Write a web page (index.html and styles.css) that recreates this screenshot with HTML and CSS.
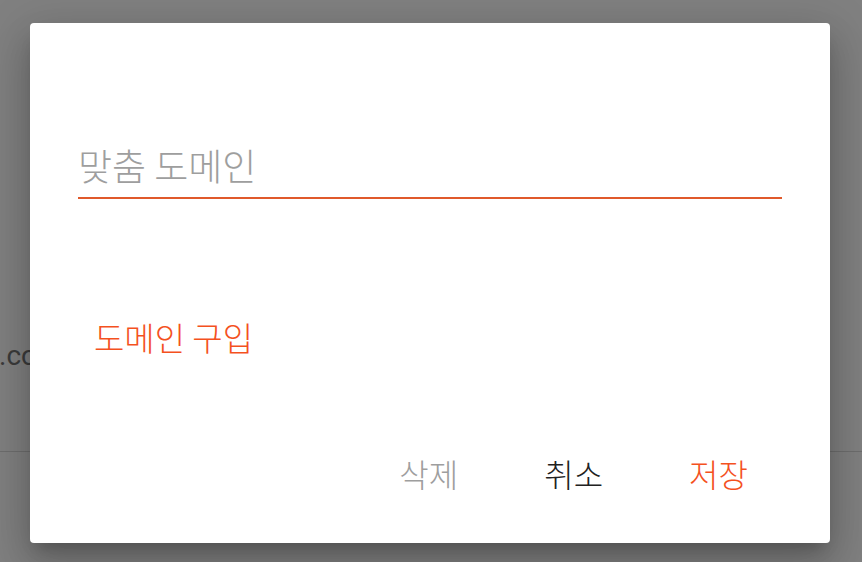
FILE: index.html
```html
<!DOCTYPE html>
<html>
    <head>
        <meta charset="utf-8">
        <title>맞춤 도메인</title>
        <link rel="stylesheet" href="styles.css">
    </head>
    <body>
    <div id="page">
        <div class="url">.com</div>
        <div class="rule"></div>
    </div>
    <div class="dialog">
        <div class="field">
            <input type="text" id="domain" placeholder="맞춤 도메인">
        </div>
        <div class="buy"><button class="btn accent">도메인 구입</button></div>
        <div class="actions">
            <button class="btn muted">삭제</button>
            <button class="btn">취소</button>
            <button class="btn accent">저장</button>
        </div>
    </div>
    </body>
</html>
```

FILE: styles.css
```css
body{
    margin: 0;
    height: 562px;
    background: #808080;
    font-family: "Noto Sans CJK KR", "Noto Sans", sans-serif;
    overflow: hidden;
}
#page{
    padding-top: 334px;
}
.url{
    font-family: Roboto, "Noto Sans CJK KR", sans-serif;
    font-size: 28px;
    line-height: 44px;
    color: #3b3b3b;
    margin-left: -1px;
}
.rule{
    margin-top: 73px;
    height: 1px;
    background: #6e6e6e;
}
.dialog{
    position: absolute;
    left: 30px;
    top: 23px;
    width: 800px;
    height: 520px;
    box-sizing: border-box;
    padding: 0 48px;
    background: #fff;
    border-radius: 4px;
    box-shadow: 0 11px 15px -7px rgba(0,0,0,.2), 0 24px 38px 3px rgba(0,0,0,.14), 0 9px 46px 8px rgba(0,0,0,.12);
    display: flex;
    flex-direction: column;
}
.field{
    margin-top: 118px;
    border-bottom: 2px solid #e0592b;
    padding-bottom: 8px;
}
#domain{
    display: block;
    width: 100%;
    height: 48px;
    border: 0;
    outline: none;
    padding: 0;
    font-family: inherit;
    font-size: 37px;
    font-weight: 300;
    color: #212121;
    background: transparent;
}
#domain::placeholder{
    color: #9e9e9e;
}
.buy{
    margin-top: 110px;
}
.btn{
    height: 56px;
    padding: 0 16px;
    border: 0;
    background: transparent;
    font-family: inherit;
    font-size: 32px;
    font-weight: 300;
    color: #212121;
    cursor: pointer;
}
.buy .btn{
    font-size: 33px;
}
.accent{
    color: #f4511e;
}
.muted{
    color: #9e9e9e;
}
.actions{
    margin-top: 80px;
    display: flex;
    justify-content: flex-end;
    gap: 54px;
    margin-right: 18px;
}
```
